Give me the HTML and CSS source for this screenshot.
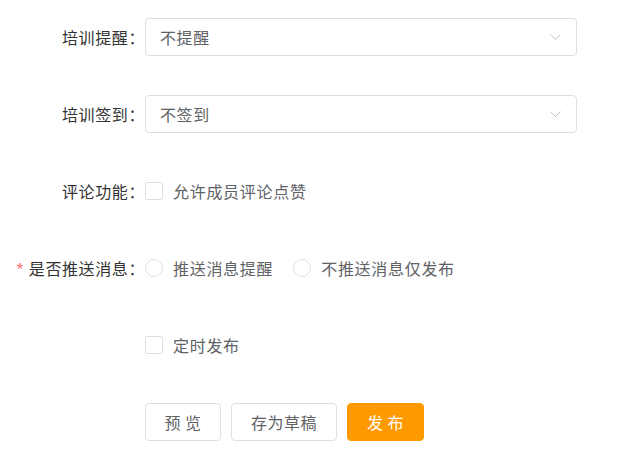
FILE: index.html
```html
<!DOCTYPE html>
<html lang="zh-CN">
<head>
    <meta charset="UTF-8">
    <meta name="viewport" content="width=device-width, initial-scale=1.0">
    <title>培训发布</title>
    <link rel="stylesheet" href="styles.css">
</head>
<body>
    <form class="form">
        <div class="row">
            <label class="label">培训提醒：</label>
            <div class="select">
                <span class="select-value">不提醒</span>
                <svg class="arrow" width="11" height="7" viewBox="0 0 11 7"><polyline points="0.5,0.5 5.5,5.5 10.5,0.5" fill="none" stroke="#c0c4cc" stroke-width="1"/></svg>
            </div>
        </div>
        <div class="row">
            <label class="label">培训签到：</label>
            <div class="select">
                <span class="select-value">不签到</span>
                <svg class="arrow" width="11" height="7" viewBox="0 0 11 7"><polyline points="0.5,0.5 5.5,5.5 10.5,0.5" fill="none" stroke="#c0c4cc" stroke-width="1"/></svg>
            </div>
        </div>
        <div class="row">
            <label class="label">评论功能：</label>
            <div class="options">
                <span class="option"><span class="checkbox"></span>允许成员评论点赞</span>
            </div>
        </div>
        <div class="row">
            <label class="label"><span class="required">*</span>是否推送消息：</label>
            <div class="options">
                <span class="option"><span class="radio"></span>推送消息提醒</span>
                <span class="option"><span class="radio"></span>不推送消息仅发布</span>
            </div>
        </div>
        <div class="row">
            <label class="label"></label>
            <div class="options">
                <span class="option"><span class="checkbox"></span>定时发布</span>
            </div>
        </div>
        <div class="row">
            <label class="label"></label>
            <div class="buttons">
                <button type="button" class="btn btn-preview">预 览</button>
                <button type="button" class="btn btn-draft">存为草稿</button>
                <button type="button" class="btn btn-primary">发 布</button>
            </div>
        </div>
    </form>
</body>
</html>
```

FILE: styles.css
```css
body {
    margin: 0;
    padding: 18px 0 0 0;
    background: #fff;
    font-family: "Noto Sans CJK SC", "Noto Sans", sans-serif;
    font-size: 16px;
    color: #333;
}
.form {
    width: 633px;
}
.row {
    display: flex;
    align-items: center;
    height: 38px;
    margin-bottom: 39px;
}
.label {
    width: 145px;
    flex-shrink: 0;
    text-align: right;
    color: #333;
    letter-spacing: 0.6px;
    box-sizing: border-box;
}
.required {
    color: #f56c6c;
    margin-right: 5px;
    font-size: 17px;
    font-family: "Liberation Sans", sans-serif;
}
.select {
    width: 432px;
    height: 38px;
    box-sizing: border-box;
    border: 1px solid #dcdfe6;
    border-radius: 4px;
    display: flex;
    align-items: center;
    justify-content: space-between;
    padding: 0 15px 0 14px;
}
.select-value {
    color: #606266;
    letter-spacing: 0.6px;
}
.options {
    display: flex;
    align-items: center;
    gap: 20px;
}
.option {
    display: flex;
    align-items: center;
    color: #606266;
    letter-spacing: 0.7px;
}
.checkbox, .radio {
    width: 18px;
    height: 18px;
    box-sizing: border-box;
    border: 1px solid #dcdfe6;
    margin-right: 10px;
    background: #fff;
}
.checkbox {
    border-radius: 2px;
}
.radio {
    border-radius: 50%;
}
.buttons {
    display: flex;
    gap: 10px;
}
.btn {
    height: 38px;
    box-sizing: border-box;
    border: 1px solid #dcdfe6;
    border-radius: 4px;
    background: #fff;
    color: #606266;
    font-family: inherit;
    font-size: 16px;
    letter-spacing: 0.5px;
    padding: 0;
    cursor: pointer;
}
.btn-preview {
    width: 76px;
}
.btn-draft {
    width: 106px;
}
.btn-primary {
    width: 77px;
    background: #ff9900;
    border-color: #ff9900;
    color: #fff;
}
```
